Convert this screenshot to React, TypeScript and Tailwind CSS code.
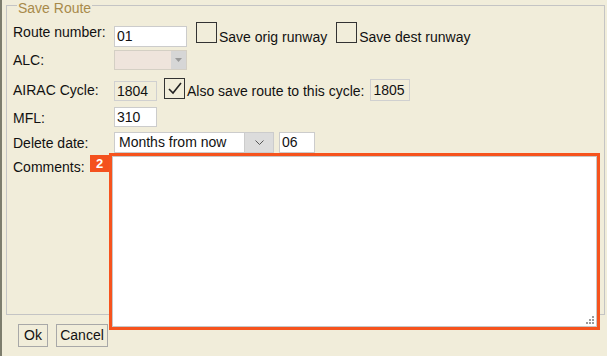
import React from "react";

const Checkbox = ({ checked = false }: { checked?: boolean }) => (
  <span className="flex h-[21px] w-[21px] shrink-0 items-center justify-center border border-[#333]">
    {checked && (
      <svg width="17" height="17" viewBox="0 0 17 17">
        <polyline
          points="3,9 7,13 15,3"
          fill="none"
          stroke="#222"
          strokeWidth="1.6"
        />
      </svg>
    )}
  </span>
);

const ResizeGrip = () => (
  <svg width="10" height="10" viewBox="0 0 10 10" className="absolute bottom-[2px] right-[2px]">
    <rect x="7" y="1" width="2" height="2" fill="#9a9a9a" />
    <rect x="4" y="4" width="2" height="2" fill="#9a9a9a" />
    <rect x="7" y="4" width="2" height="2" fill="#9a9a9a" />
    <rect x="1" y="7" width="2" height="2" fill="#9a9a9a" />
    <rect x="4" y="7" width="2" height="2" fill="#9a9a9a" />
    <rect x="7" y="7" width="2" height="2" fill="#9a9a9a" />
  </svg>
);

const App = () => {
  return (
    <div className="h-[356px] w-[607px] overflow-hidden border-l-2 border-[#7d7d6d] bg-[#f1edda] pl-[4px] font-['Liberation_Sans',Arial,sans-serif] text-[14px] text-[#111]">
      <fieldset className="h-[315px] w-[599px] border border-[#c4c4c4] pl-[6px] pt-[11px]">
        <legend className="ml-[4px] block h-[11px] px-[1px] leading-[16px] text-[#a88a4a]">
          Save Route
        </legend>

        {/* Route number */}
        <div className="flex h-[26px] items-start">
          <label className="mt-[2px] w-[101px] leading-4">Route number:</label>
          <div className="mt-[4px] flex h-[21px] w-[73px] items-center border border-[#ccc] bg-white pl-[2px]">
            01
          </div>
          <span className="ml-[9px]">
            <Checkbox />
          </span>
          <span className="ml-[2px] mt-[7px] leading-4">Save orig runway</span>
          <span className="ml-[9px]">
            <Checkbox />
          </span>
          <span className="ml-[2px] mt-[7px] leading-4">Save dest runway</span>
        </div>

        {/* ALC */}
        <div className="flex h-[28px] items-start">
          <label className="mt-[4px] w-[101px] leading-4">ALC:</label>
          <div className="mt-[2px] flex h-[20px] w-[73px] border border-[#d4cfc4] bg-[#efe4dc]">
            <div className="flex-1" />
            <div className="flex w-[15px] items-center justify-center bg-[#d6d6d6]">
              <svg width="7" height="4" viewBox="0 0 7 4">
                <polygon points="0,0 7,0 3.5,4" fill="#999" />
              </svg>
            </div>
          </div>
        </div>

        {/* AIRAC Cycle */}
        <div className="flex h-[28px] items-start">
          <label className="mt-[6px] w-[101px] leading-4">AIRAC Cycle:</label>
          <div className="mt-[5px] flex h-[20px] w-[43px] items-center border border-[#d0d0d0] pl-[2px]">
            1804
          </div>
          <span className="ml-[7px] mt-[2px]">
            <Checkbox checked />
          </span>
          <span className="ml-[2px] mt-[7px] leading-4">
            Also save route to this cycle:
          </span>
          <div className="ml-[6px] mt-[3px] flex h-[22px] w-[40px] items-center border border-[#d0d0d0] pl-[2px]">
            1805
          </div>
        </div>

        {/* MFL */}
        <div className="flex h-[26px] items-start">
          <label className="mt-[6px] w-[101px] leading-4">MFL:</label>
          <div className="mt-[3px] flex h-[20px] w-[43px] items-center border border-[#ccc] bg-white pl-[2px]">
            310
          </div>
        </div>

        {/* Delete date */}
        <div className="flex h-[23px] items-start">
          <label className="mt-[5px] w-[101px] leading-4">Delete date:</label>
          <div className="mt-[2px] flex h-[21px] w-[160px] border border-[#ccc] bg-white">
            <div className="flex flex-1 items-center pl-[4px]">Months from now</div>
            <div className="flex w-[29px] items-center justify-center border-l border-[#ccc] bg-[#dcdcdc]">
              <svg width="9" height="6" viewBox="0 0 9 6">
                <polyline points="0.5,0.5 4.5,4.5 8.5,0.5" fill="none" stroke="#555" strokeWidth="1" />
              </svg>
            </div>
          </div>
          <div className="ml-[5px] mt-[2px] flex h-[21px] w-[36px] items-center border border-[#ccc] bg-white pl-[2px]">
            06
          </div>
        </div>

        {/* Comments */}
        <div className="flex items-start">
          <label className="mt-[6px] w-[77px] leading-4">Comments:</label>
          <span className="mt-[2px] flex h-[17px] w-[19px] items-center justify-center bg-[#f4511e] text-[13px] font-bold text-white">
            2
          </span>
          <div className="relative h-[177px] w-[491px] border-[3px] border-[#f6531d]">
            <textarea className="block h-full w-full resize-none border border-[#c8c8c8] bg-white outline-none" />
            <ResizeGrip />
          </div>
        </div>
      </fieldset>

      <div className="ml-[12px] mt-[9px] flex gap-[8px]">
        <button className="flex h-[23px] w-[30px] items-center justify-center border border-[#a8a8a8]">
          Ok
        </button>
        <button className="flex h-[23px] w-[52px] items-center justify-center border border-[#a8a8a8]">
          Cancel
        </button>
      </div>
    </div>
  );
};

export default App;
